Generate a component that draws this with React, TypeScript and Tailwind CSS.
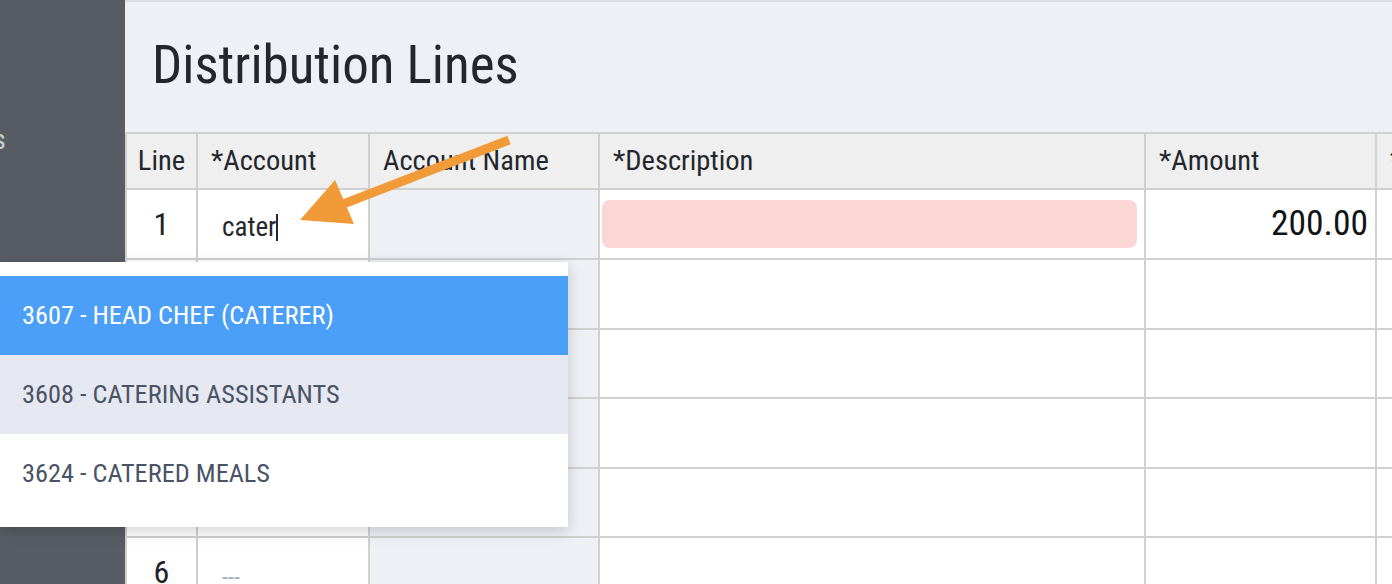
const rows = [
  { n: "1", h: "h-[70px]" },
  { n: "2", h: "h-[70px]" },
  { n: "3", h: "h-[69px]" },
  { n: "4", h: "h-[70px]" },
  { n: "5", h: "h-[69px]" },
  { n: "6", h: "h-[70px]" },
];

const options = [
  { label: "3607 - HEAD CHEF (CATERER)", cls: "bg-[#4c9ff8] text-white" },
  { label: "3608 - CATERING ASSISTANTS", cls: "bg-[#e5e8f0] text-[#4a5365]" },
  { label: "3624 - CATERED MEALS", cls: "bg-white text-[#4a5365]" },
];

function HeaderCell({ children, center }: { children?: React.ReactNode; center?: boolean }) {
  return (
    <div
      className={`h-[56px] flex items-center bg-[#efefef] border-r-2 border-b-2 border-[#d0d0d0] text-[28.5px] text-[#23272d] whitespace-nowrap overflow-hidden ${
        center ? "justify-center" : "pl-[13px]"
      }`}
    >
      {children}
    </div>
  );
}

export default function App() {
  return (
    <div className="relative w-[1392px] h-[584px] overflow-hidden flex font-['Roboto',sans-serif] font-stretch-condensed">
      {/* sidebar */}
      <div className="w-[125px] shrink-0 bg-[#585c64] overflow-hidden">
        <div className="mt-[119px] -ml-[7px] text-[28px] text-[#c9ccd2]">s</div>
      </div>

      {/* main */}
      <div className="flex-1 bg-[#eff0f5] border-t-2 border-[#dcdde2] overflow-hidden">
        <h1 className="pl-[27px] pt-[33px] h-[130px] text-[53px] leading-[60px] text-[#23262b]">
          Distribution Lines
        </h1>

        <div className="grid grid-cols-[71px_172px_230px_546px_231px_250px] border-l-2 border-t-2 border-[#d0d0d0] w-max">
          <HeaderCell center>Line</HeaderCell>
          <HeaderCell>*Account</HeaderCell>
          <HeaderCell>Account Name</HeaderCell>
          <HeaderCell>*Description</HeaderCell>
          <HeaderCell>*Amount</HeaderCell>
          <HeaderCell>*Unit</HeaderCell>

          {rows.map((r, i) => (
            <div key={r.n} className="contents">
              <div
                className={`${r.h} flex items-center justify-center bg-white border-r-2 border-b-2 border-[#d0d0d0] text-[32px] text-[#1f2227]`}
              >
                {r.n}
              </div>
              <div
                className={`${r.h} flex items-center pl-[24px] bg-white border-r-2 border-b-2 border-[#d0d0d0]`}
              >
                {i === 0 ? (
                  <span className="flex items-center mt-[6px] text-[27px] text-[#23272d]">
                    cater
                    <span className="w-[2px] h-[27px] bg-[#23272d]" />
                  </span>
                ) : (
                  <span className="mt-[10px] text-[24px] leading-none text-[#a0aec0]">---</span>
                )}
              </div>
              <div className={`${r.h} bg-[#eff0f5] border-r-2 border-b-2 border-[#d0d0d0]`} />
              <div className={`${r.h} flex items-center pl-[2px] pr-[7px] bg-white border-r-2 border-b-2 border-[#d0d0d0]`}>
                {i === 0 && <div className="w-full h-[48px] rounded-[8px] bg-[#fad7d5]" />}
              </div>
              <div
                className={`${r.h} flex items-center justify-end pr-[7px] bg-white border-r-2 border-b-2 border-[#d0d0d0] text-[35.5px] text-[#111317]`}
              >
                {i === 0 ? "200.00" : ""}
              </div>
              <div className={`${r.h} bg-white border-r-2 border-b-2 border-[#d0d0d0]`} />
            </div>
          ))}
        </div>
      </div>

      {/* autocomplete menu */}
      <div className="absolute left-0 top-[262px] w-[568px] h-[265px] bg-white py-[14px] shadow-[0_4px_14px_rgba(0,0,0,0.18)]">
        {options.map((o) => (
          <div key={o.label} className={`h-[79px] flex items-center pl-[22px] text-[26.3px] ${o.cls}`}>
            {o.label}
          </div>
        ))}
      </div>

      {/* annotation arrow */}
      <svg className="absolute left-0 top-0 pointer-events-none" width="1392" height="584" viewBox="0 0 1392 584">
        <line x1="509" y1="140" x2="338" y2="206" stroke="#f19b38" strokeWidth="9" />
        <polygon points="300,220 335,180 354,224" fill="#f19b38" />
      </svg>
    </div>
  );
}
